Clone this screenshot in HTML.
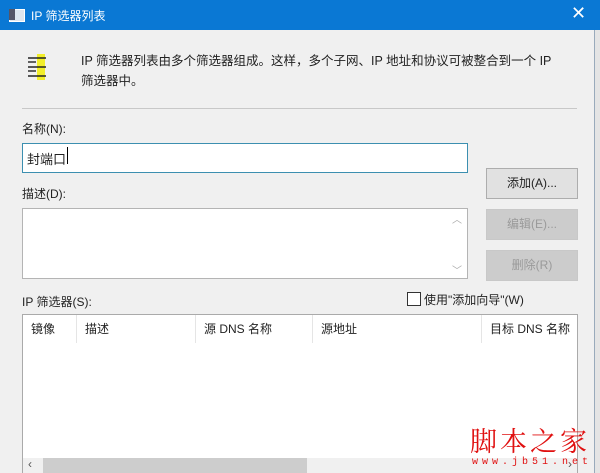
<!DOCTYPE html>
<html><head><meta charset="utf-8"><style>
html,body{margin:0;width:600px;height:473px;overflow:hidden}
body{background:#f0f0f0;font-family:"Liberation Sans","Noto Sans CJK SC",sans-serif;font-size:12px;color:#222;position:relative}
.a{position:absolute;white-space:nowrap}
.btn{position:absolute;left:486px;width:90px;height:29px;border:1px solid #adadad;background:#e1e1e1;text-align:center;line-height:29px;font-size:12px}
.dis{color:#9a9a9a;border-color:#c8c8c8;background:#ccc}
.hd{position:absolute;top:0;height:28px;line-height:28px;padding-left:8px;border-right:1px solid #e5e5e5;color:#222;white-space:nowrap}
</style></head><body>
<div class="a" style="left:0;top:0;width:600px;height:30px;background:#0a78d4"></div>
<div class="a" style="left:9px;top:9px;width:14px;height:11px;background:#dfe6ee;border:1px solid #fff"></div>
<div class="a" style="left:9px;top:9px;width:6px;height:11px;background:#556"></div>
<div class="a" style="left:31px;top:7px;color:#fff;font-size:12px">IP 筛选器列表</div>
<div class="a" style="left:571px;top:3px;color:#fff;font-size:18px">✕</div>
<div class="a" style="left:594px;top:30px;width:1px;height:443px;background:#9ab"></div>
<div class="a" style="left:595px;top:30px;width:5px;height:443px;background:#e4e4e4"></div>
<svg class="a" style="left:26px;top:52px" width="24" height="30"><rect x="11" y="2" width="8" height="26" fill="#f2ee2a"/><g stroke="#222" stroke-width="1.4"><line x1="2" y1="6" x2="20" y2="6"/><line x1="2" y1="15" x2="20" y2="15"/><line x1="2" y1="24" x2="20" y2="24"/><line x1="2" y1="10" x2="10" y2="10"/><line x1="2" y1="19" x2="10" y2="19"/></g></svg>
<div class="a" style="left:81px;top:51px;line-height:20px;font-size:12.5px">IP 筛选器列表由多个筛选器组成。这样，多个子网、IP 地址和协议可被整合到一个 IP<br>筛选器中。</div>
<div class="a" style="left:22px;top:108px;width:555px;height:1px;background:#c8c8c8"></div>
<div class="a" style="left:22px;top:120px">名称(N):</div>
<div class="a" style="left:22px;top:143px;width:444px;height:28px;background:#fff;border:1px solid #3c8fb0"></div>
<div class="a" style="left:27px;top:149px;font-size:13px">封端口</div>
<div class="a" style="left:67px;top:147px;width:1px;height:17px;background:#000"></div>
<div class="a" style="left:22px;top:185px">描述(D):</div>
<div class="a" style="left:22px;top:208px;width:444px;height:69px;background:#fff;border:1px solid #b4b4b4"></div>
<div class="a" style="left:452px;top:211px;color:#aaa;font-size:10px">︿</div>
<div class="a" style="left:452px;top:262px;color:#aaa;font-size:10px">﹀</div>
<div class="btn" style="top:168px">添加(A)...</div>
<div class="btn dis" style="top:209px">编辑(E)...</div>
<div class="btn dis" style="top:250px">删除(R)</div>
<div class="a" style="left:22px;top:293px">IP 筛选器(S):</div>
<div class="a" style="left:407px;top:292px;width:12px;height:12px;border:1px solid #333;background:#fff"></div>
<div class="a" style="left:424px;top:291px">使用"添加向导"(W)</div>
<div class="a" style="left:22px;top:314px;width:554px;height:159px;background:#fff;border:1px solid #aaa;border-bottom:none;overflow:hidden">
<div class="hd" style="left:0;width:45px">镜像</div>
<div class="hd" style="left:54px;width:110px">描述</div>
<div class="hd" style="left:173px;width:108px">源 DNS 名称</div>
<div class="hd" style="left:290px;width:160px">源地址</div>
<div class="hd" style="left:459px;width:100px;border:none">目标 DNS 名称</div>
<div class="a" style="left:0;top:143px;width:554px;height:16px;background:#f0f0f0"></div>
<div class="a" style="left:20px;top:143px;width:264px;height:16px;background:#cdcdcd"></div>
<div class="a" style="left:5px;top:142px;font-size:12px;color:#555">‹</div>
<div class="a" style="left:545px;top:142px;font-size:12px;color:#555">›</div>
</div>
<div class="a" style="left:470px;top:424px;color:#e01010;font-size:27px;line-height:32px;font-family:'Noto Serif CJK SC',serif;letter-spacing:3px">脚本之家</div>
<div class="a" style="left:472px;top:457px;color:#e01010;font-size:10px;line-height:12px;letter-spacing:4px;font-family:'Liberation Mono',monospace">www.jb51.net</div>
</body></html>
